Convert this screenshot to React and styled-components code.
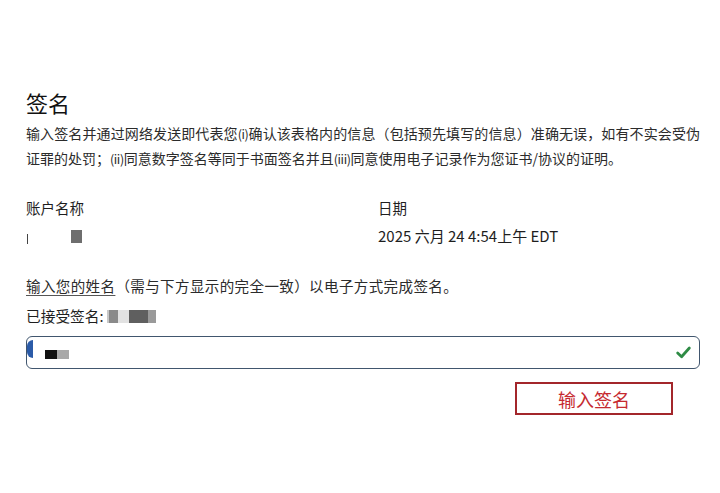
import React from 'react';
import styled, { createGlobalStyle } from 'styled-components';

function App() {
  return (
    <>
      <GlobalStyle />
      <Page>
        <Title>签名</Title>
        <Notice>
          <NoticeLine justified>
            输入签名并通过网络发送即代表您<Roman>(i)</Roman>确认该表格内的信息（包括预先填写的信息）准确无误，如有不实会受伪
          </NoticeLine>
          <NoticeLine>
            证罪的处罚；<Roman>(ii)</Roman>同意数字签名等同于书面签名并且<Roman>(iii)</Roman>同意使用电子记录作为您证书/协议的证明。
          </NoticeLine>
        </Notice>

        <InfoGrid>
          <Label>账户名称</Label>
          <Label>日期</Label>
          <Value>
            <Caret />
            <Blur tone="#6e6e6e" w={11} />
          </Value>
          <Value>2025 六月 24 4:54上午 EDT</Value>
        </InfoGrid>

        <Instruction>
          <Underlined>输入您的姓名</Underlined>（需与下方显示的完全一致）以电子方式完成签名。
        </Instruction>

        <Accepted>
          已接受签名:
          <Masked>
            <Blur tone="#c8c8c8" w={2} />
            <Blur tone="#8a8a8a" w={9} />
            <Blur tone="#e2e2e2" w={11} />
            <Blur tone="#5f5f5f" w={19} />
            <Blur tone="#9a9a9a" w={8} />
          </Masked>
        </Accepted>

        <SignatureField>
          <FocusMark />
          <Masked>
            <Blur tone="#111" w={12} h={9} />
            <Blur tone="#a8a8a8" w={12} h={9} />
          </Masked>
          <CheckIcon viewBox="0 0 16 16">
            <path d="M2.5 8.5 L6.2 12 L13.5 3.8" />
          </CheckIcon>
        </SignatureField>

        <Actions>
          <SignButton type="button">输入签名</SignButton>
        </Actions>
      </Page>
    </>
  );
}

const GlobalStyle = createGlobalStyle`
  html, body {
    margin: 0;
    background: #fff;
  }
  body {
    font-family: "Noto Sans CJK SC", "Noto Sans", sans-serif;
    color: #222;
  }
`;

const Page = styled.div`
  padding: 88px 20px 0 26px;
`;

const Title = styled.h1`
  margin: 0;
  font-size: 22px;
  line-height: 28px;
  font-weight: 400;
  color: #111;
`;

const Notice = styled.div`
  margin-top: 5px;
  font-size: 14px;
  line-height: 25px;
  color: #2b2b2b;
`;

const NoticeLine = styled.span`
  display: block;
  white-space: nowrap;
  text-align: justify;
  text-align-last: ${p => (p.justified ? 'justify' : 'auto')};
`;

const Roman = styled.span`
  font-size: 12.5px;
  line-height: 1;
  letter-spacing: -0.4px;
`;

const InfoGrid = styled.div`
  display: grid;
  grid-template-columns: 352px 1fr;
  row-gap: 8px;
  margin-top: 27px;
`;

const Label = styled.div`
  font-size: 14.5px;
  line-height: 20px;
  color: #1e1e1e;
`;

const Value = styled.div`
  display: flex;
  align-items: center;
  font-size: 15px;
  line-height: 20px;
  color: #1e1e1e;
  height: 20px;
`;

const Caret = styled.span`
  width: 1px;
  height: 10px;
  margin: 6px 43px 0 1px;
  background: #444;
`;

const Blur = styled.span`
  display: inline-block;
  width: ${p => p.w}px;
  height: ${p => p.h || 13}px;
  background: ${p => p.tone};
  filter: blur(0.4px);
`;

const Instruction = styled.p`
  margin: 30px 0 0;
  font-size: 14.5px;
  line-height: 20px;
  letter-spacing: 0.4px;
  color: #2b2b2b;
`;

const Underlined = styled.span`
  text-decoration: underline;
  text-underline-offset: 3px;
  text-decoration-color: #555;
`;

const Accepted = styled.div`
  display: flex;
  align-items: center;
  margin-top: 10px;
  font-size: 14.7px;
  line-height: 20px;
  color: #1e1e1e;
`;

const Masked = styled.span`
  display: inline-flex;
  align-items: center;
  margin-left: 3px;
`;

const SignatureField = styled.div`
  position: relative;
  display: flex;
  align-items: center;
  justify-content: space-between;
  box-sizing: border-box;
  height: 33px;
  margin-top: 10px;
  padding: 3px 7px 0 15px;
  border: 1.5px solid #41566e;
  border-radius: 6px;
  background: #fff;
`;

const FocusMark = styled.span`
  position: absolute;
  left: 0;
  top: 3px;
  width: 6px;
  height: 18px;
  border-radius: 9px 0 0 9px;
  background: #2b5ba8;
`;

const CheckIcon = styled.svg`
  width: 17px;
  height: 17px;
  margin-top: -4px;
  fill: none;
  stroke: #2e8b45;
  stroke-width: 2.6;
  stroke-linecap: round;
  stroke-linejoin: round;
`;

const Actions = styled.div`
  display: flex;
  justify-content: flex-end;
  padding-right: 27px;
  margin-top: 13px;
`;

const SignButton = styled.button`
  box-sizing: border-box;
  width: 158px;
  height: 33px;
  border: 2px solid #a3262b;
  background: #fff;
  color: #c62a30;
  font-family: "Noto Sans CJK SC", sans-serif;
  font-size: 18px;
  line-height: 1;
  cursor: pointer;
`;

export default App;
